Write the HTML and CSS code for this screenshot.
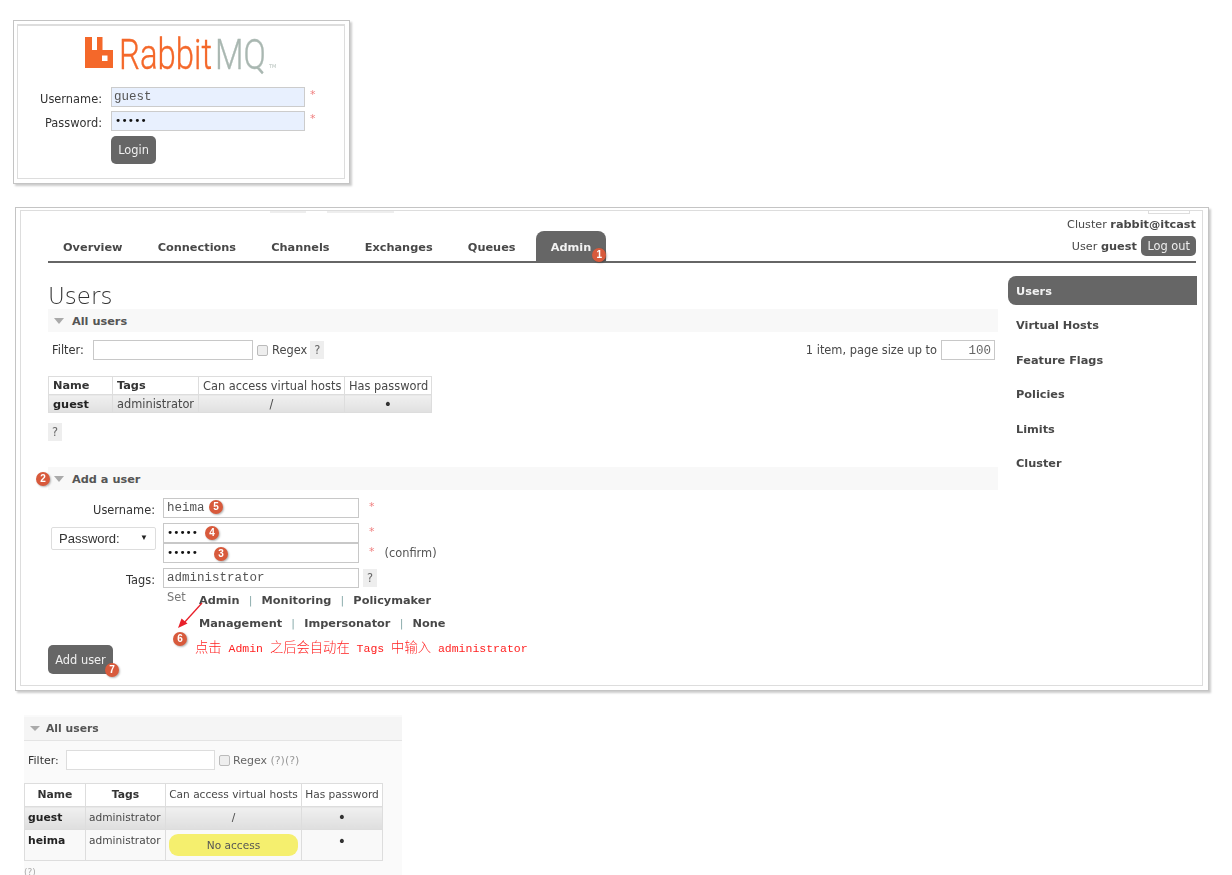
FILE: index.html
```html
<!DOCTYPE html>
<html lang="en">
<head>
<meta charset="utf-8">
<title>RabbitMQ</title>
<link rel="stylesheet" href="styles.css">
</head>
<body>
<section class="login-shot">
  <div class="login-inner">
    <div class="logo">
      <svg class="logo-mark" viewBox="0 0 28 31" width="28" height="31" aria-hidden="true"><path fill="#f4682a" fill-rule="evenodd" d="M0 0h7v13h5V0h5.500v13H28v18H0z M17 18.500v5.500h5.500v-5.500z"/></svg>
      <span class="logo-text"><span class="logo-rabbit">Rabbit</span><span class="logo-mq">MQ</span></span>
      <span class="logo-tm">TM</span>
    </div>
    <div class="login-form">
      <label class="login-label">Username:</label>
      <div class="login-input mono">guest</div>
      <span class="req">*</span>
      <label class="login-label">Password:</label>
      <div class="login-input dots">•••••</div>
      <span class="req">*</span>
      <span></span>
      <div class="btn login-btn">Login</div>
    </div>
  </div>
</section>

<section class="main-shot">
  <div class="main-inner">
    <div class="top-scraps"><i class="scrap s1"></i><i class="scrap s2"></i><i class="scrap s3"></i></div>
    <header class="head">
      <nav class="tabs">
        <a class="tab">Overview</a>
        <a class="tab">Connections</a>
        <a class="tab">Channels</a>
        <a class="tab">Exchanges</a>
        <a class="tab">Queues</a>
        <a class="tab active">Admin<b class="badge b1">1</b></a>
      </nav>
      <div class="who">
        <div>Cluster <b>rabbit@itcast</b></div>
        <div class="who-user">User <b>guest</b> <span class="logout">Log out</span></div>
      </div>
    </header>
    <div class="body-row">
      <main class="content">
        <h1>Users</h1>
        <div class="bar"><span class="tri"></span>All users</div>
        <div class="filter-row">
          <span class="filter-label">Filter:</span>
          <span class="input filter-input"></span>
          <span class="check"></span>
          <span class="regex">Regex</span>
          <span class="help">?</span>
          <span class="paging">1 item, page size up to</span>
          <span class="input page-input mono">100</span>
        </div>
        <table class="tbl">
          <thead><tr><th class="c1">Name</th><th class="c2">Tags</th><th class="c3">Can access virtual hosts</th><th class="c4">Has password</th></tr></thead>
          <tbody><tr><td class="nm">guest</td><td>administrator</td><td class="ctr">/</td><td class="ctr dot">•</td></tr></tbody>
        </table>
        <span class="help help-block">?</span>
        <div class="bar add-bar"><b class="badge b2">2</b><span class="tri"></span>Add a user</div>
        <div class="add-form">
          <div class="form-label">Username:</div>
          <div class="input form-input mono rel">heima<b class="badge b5">5</b></div>
          <div class="form-note"><span class="req">*</span></div>

          <div class="pw-select">Password:<span class="pw-arrow">▼</span></div>
          <div class="input form-input dots rel">•••••<b class="badge b4">4</b></div>
          <div class="form-note"><span class="req">*</span></div>
          <div class="input form-input dots rel">•••••<b class="badge b3">3</b></div>
          <div class="form-note"><span class="req">*</span><span class="confirm">(confirm)</span></div>

          <div class="form-label">Tags:</div>
          <div class="input form-input mono">administrator</div>
          <div class="form-note tags-note"><span class="help">?</span></div>

          <div class="tag-set">
            <span class="set">Set</span>
            <div class="tag-lines">
              <div class="tag-line"><b>Admin</b><i>|</i><b>Monitoring</b><i>|</i><b>Policymaker</b></div>
              <div class="tag-line"><b>Management</b><i>|</i><b>Impersonator</b><i>|</i><b>None</b></div>
              <div class="note-line"><span class="cjk">点击</span> Admin <span class="cjk">之后会自动在</span> Tags <span class="cjk">中输入</span> administrator</div>
            </div>
            <svg class="arrow" width="40" height="50" viewBox="0 0 40 50" aria-hidden="true"><path d="M27 10 8 31" stroke="#e8202a" stroke-width="1.300" fill="none"/><path d="M3 35l3.500-9.500 6 5z" fill="#e8202a"/></svg>
            <b class="badge b6">6</b>
          </div>
        </div>
        <div class="btn add-btn">Add user<b class="badge b7">7</b></div>
      </main>
      <aside class="side">
        <a class="side-item active">Users</a>
        <a class="side-item">Virtual Hosts</a>
        <a class="side-item">Feature Flags</a>
        <a class="side-item">Policies</a>
        <a class="side-item">Limits</a>
        <a class="side-item">Cluster</a>
      </aside>
    </div>
  </div>
</section>

<section class="after-shot">
  <div class="bar2"><span class="tri tri2"></span>All users</div>
  <div class="filter2">
    <span class="f2-label">Filter:</span>
    <span class="f2-input"></span>
    <span class="check check2"></span>
    <span class="f2-regex">Regex <em>(?)(?)</em></span>
  </div>
  <table class="tbl2">
    <thead><tr><th class="d1">Name</th><th class="d2">Tags</th><th class="d3 light">Can access virtual hosts</th><th class="d4 light">Has password</th></tr></thead>
    <tbody>
      <tr class="r-guest"><td class="nm">guest</td><td>administrator</td><td class="ctr">/</td><td class="ctr dot">•</td></tr>
      <tr class="r-heima"><td class="nm">heima</td><td>administrator</td><td class="pill-cell"><span class="pill">No access</span></td><td class="ctr dot">•</td></tr>
    </tbody>
  </table>
  <div class="cut">(?)</div>
</section>
</body>
</html>
```

FILE: styles.css
```css
* { box-sizing: border-box; }
html, body { margin: 0; padding: 0; background: #fff; }
body {
  width: 1232px; height: 875px; overflow: hidden;
  font-family: "DejaVu Sans", Verdana, sans-serif;
  font-size: 11.4px; color: #484848;
  padding-top: 20px;
}
b { font-weight: 700; font-size: 11.3px; }
.mono { font-family: "Liberation Mono", monospace; }
.dots { font-family: "DejaVu Sans", sans-serif; font-size: 11px; color: #111; }
.rel { position: relative; }

/* login */
.login-shot {
  width: 337px; height: 164px; margin-left: 13px; padding: 3px 4px 4px 3px;
  background: #fff; border: 1px solid #c4c4c4; box-shadow: 2px 2px 2px #ccc; filter: blur(.3px);
}
.login-inner { height: 100%; border: 1px solid #ddd; border-top-width: 2px; }
.logo { display: flex; align-items: flex-start; height: 61px; padding: 11px 0 0 67px; position: relative; }
.logo-mark { flex: none; }
.logo-text {
  display: block; font-family: Roboto, sans-serif; font-weight: 300; font-size: 43px; line-height: 35px;
  margin-left: 6px; width: 160px; white-space: nowrap; transform: scaleX(.765); transform-origin: left center;
}
.logo-rabbit { color: #f4682a; -webkit-text-stroke: .4px #f4682a; }
.logo-mq { color: #a9b7b1; margin-left: 4px; -webkit-text-stroke: .4px #a9b7b1; }
.logo-tm { position: absolute; left: 251px; top: 37px; font-size: 5px; color: #b5c0bb; }
.login-form { display: grid; grid-template-columns: 84px 194px auto; column-gap: 9px; row-gap: 4px; align-items: center; }
.login-label { text-align: right; color: #333; padding-top: 3px; }
.login-input {
  height: 20px; background: #e8f0fe; border: 1px solid #ccc; font-size: 12.500px; line-height: 18px; padding-left: 2px; color: #555;
}
.login-input.dots { color: #111; font-size: 10.500px; line-height: 17px; letter-spacing: .2px; padding-left: 3px; }
.req { color: #f08080; font-size: 11px; }
.login-form .req { margin-top: -6px; margin-left: -4px; }
.btn { background: #666; color: #f0f0f0; border-radius: 5px; display: flex; align-items: center; justify-content: center; }
.login-btn { grid-column: 2; width: 45px; height: 28px; margin-top: 1px; }

/* main */
.main-shot {
  width: 1194px; height: 484px; margin: 23px 0 0 15px; padding: 2px 5px 4px 4px;
  background: #fff; border: 1px solid #c4c4c4; box-shadow: 2px 2px 2px #ccc; filter: blur(.3px);
}
.main-inner { height: 100%; border: 1px solid #ddd; padding: 0 6px 0 27px; position: relative; }
.top-scraps { position: absolute; left: 0; right: 0; top: 0; height: 3px; }
.scrap { position: absolute; top: 0; height: 2px; background: #eee; }
.s1 { left: 249px; width: 36px; }
.s2 { left: 306px; width: 67px; }
.s3 { left: 1127px; width: 42px; height: 3px; background: #fff; border: 1px solid #ddd; border-top: 0; }
.head { display: flex; justify-content: space-between; height: 52px; border-bottom: 2px solid #666; }
.tabs { display: flex; align-items: flex-end; }
.tab {
  font-weight: 700; font-size: 11.3px; color: #484848; height: 30px; line-height: 33px; padding: 0 15px; margin-right: 5.200px; position: relative; white-space: nowrap;
}
.tab.active { background: #666; color: #f2f2f2; border-radius: 8px 8px 0 0; margin-right: 0; }
.who { text-align: right; padding-top: 6px; line-height: 16px; font-size: 11.2px; }
.who-user { margin-top: 3px; }
.who b { color: #484848; }
.logout { display: inline-block; background: #666; color: #eee; border-radius: 5px; padding: 0 6px; height: 20px; line-height: 20px; margin-left: 1px; font-size: 11.4px; }
.body-row { display: flex; }
.content { width: 950px; position: relative; flex: none; }
h1 { font-weight: 200; font-size: 23px; line-height: 34px; color: #333; margin: 16px 0 0; height: 30px; }
.bar { height: 23px; background: #f8f8f8; font-weight: 700; font-size: 11.3px; line-height: 25px; padding-left: 24px; position: relative; color: #555; }
.tri { position: absolute; left: 6px; top: 9px; width: 0; height: 0; border: 5.500px solid transparent; border-top: 6px solid #aaa; border-bottom: 0; }
.filter-row { display: flex; align-items: center; height: 36px; padding: 0 3px 0 4px; }
.filter-label { width: 41px; color: #333; }
.input { background: #fff; border: 1px solid #c8c8c8; display: block; }
.filter-input { width: 160px; height: 20px; }
.check { width: 11px; height: 11px; background: #eee; border: 1px solid #bbb; border-radius: 2px; margin-left: 4px; }
.regex { margin-left: 4px; }
.help { display: inline-block; width: 14px; height: 18px; background: #eee; color: #666; text-align: center; line-height: 18px; margin-left: 3px; }
.paging { margin-left: auto; margin-right: 4px; }
.page-input { width: 54px; height: 20px; text-align: right; padding: 0 3px; font-size: 12.500px; line-height: 20px; color: #666; }
.tbl { border-collapse: collapse; margin-top: 8px; width: 383px; table-layout: fixed; }
.tbl th, .tbl td { border: 1px solid #ddd; padding: 0 4px; height: 18px; white-space: nowrap; font-weight: 400; text-align: left; }
.tbl th.c1, .tbl th.c2 { font-weight: 700; font-size: 11.3px; color: #333; }
.c1 { width: 64px; } .c2 { width: 86px; } .c3 { width: 146px; } .c4 { width: 87px; }
.tbl td { background: linear-gradient(#f0f0f0, #e0e0e0); padding-top: 1px; }
td.nm { font-weight: 700; font-size: 11.3px; color: #222; }
td.ctr { text-align: center; }
td.dot { font-size: 14px; line-height: 14px; color: #333; }
.help-block { display: block; margin: 10px 0 0 0; }
.add-bar { margin-top: 26px; }
.add-form {
  display: grid; grid-template-columns: 107px 196px 1fr; column-gap: 8px;
  grid-template-rows: 20px 25px 20px 25px auto;
  margin-top: 8px; position: relative;
}
.form-label { text-align: right; color: #333; line-height: 24px; align-self: end; height: 20px; }
.pw-select {
  grid-row: 2 / span 2; align-self: start; justify-self: end; margin: 9px -1px 0 0; width: 105px; height: 23px; border: 1px solid #ddd; border-radius: 2px;
  font-family: "Liberation Sans", Arial, sans-serif; font-size: 13px; line-height: 21px; padding: 0 7px; color: #333; position: relative;
}
.pw-arrow { position: absolute; right: 7px; top: -1px; font-size: 8px; color: #222; }
.form-input { height: 20px; font-size: 12.500px; line-height: 18px; padding-left: 3px; color: #555; align-self: end; }
.form-input.dots { font-size: 10.500px; color: #111; line-height: 17px; }
.form-note { display: flex; align-items: center; padding-left: 1px; align-self: end; height: 20px; }
.form-note .req { margin-left: 1px; margin-top: -4px; }
.confirm { margin-left: 10px; color: #555; }
.tags-note { padding-left: 0; }
.tags-note .help { margin-left: -4px; }
.tag-set { grid-column: 2 / span 2; position: relative; display: flex; padding-left: 4px; margin-top: 1px; }
.set { width: 32px; color: #777; margin-top: 1px; }
.tag-lines { display: flex; flex-direction: column; }
.tag-line { display: flex; align-items: center; height: 23px; white-space: nowrap; }
.tag-line b { color: #484848; }
.tag-line i { font-style: normal; color: #8aa; margin: 0 9.200px; font-size: 11px; }
.note-line { font-family: "Liberation Mono", "Noto Sans CJK SC", monospace; font-size: 11.500px; color: #f22; height: 20px; margin: 2px 0 0 -4px; white-space: nowrap; }
.cjk { font-family: "Noto Sans CJK SC", sans-serif; font-size: 13.300px; font-weight: 300; }
.arrow { position: absolute; left: 12px; top: 4px; }
.badge {
  position: absolute; width: 14px; height: 14px; border-radius: 50%; background: #d85a3c; color: #fff; font: 700 10px/14px "Liberation Sans", sans-serif; text-align: center;
  box-shadow: 1px 1px 2px rgba(0,0,0,.3);
}
.b1 { right: 0; bottom: -1px; }
.b2 { left: -12px; top: 5px; }
.b5 { left: 45px; top: 1px; }
.b4 { left: 41px; top: 2px; }
.b3 { left: 50px; top: 3px; }
.b6 { left: 10px; top: 43px; }
.b7 { right: -6px; bottom: -3px; }
.add-btn { width: 65px; height: 29px; position: absolute; left: 0; top: 382px; }
.side { flex: none; width: 189px; margin: 13px 0 0 10px; }
.side-item { display: block; height: 30px; line-height: 32px; padding-left: 8px; font-weight: 700; font-size: 11.3px; color: #484848; margin-bottom: 4.400px; }
.side-item.active { height: 29px; margin-bottom: 5.400px; background: #666; color: #f2f2f2; border-radius: 8px 0 0 8px; }

/* after */
.after-shot {
  width: 378px; height: 160px; margin: 24px 0 0 24px; background: #fafafa; overflow: hidden; filter: blur(.45px); font-size: 11px; padding-top: 2px;
}
.bar2 { height: 24px; background: #f5f5f5; border-bottom: 1px solid #e4e4e4; font-weight: 700; font-size: 10.800px; line-height: 24px; padding-left: 22px; position: relative; color: #555; }
.tri2 { left: 6px; top: 9px; border-left-width: 5px; border-right-width: 5px; border-top-width: 5px; }
.filter2 { display: flex; align-items: center; height: 38px; padding-left: 4px; }
.f2-label { width: 38px; color: #333; }
.f2-input { width: 149px; height: 20px; background: #fff; border: 1px solid #ddd; }
.check2 { margin-left: 4px; }
.f2-regex { margin-left: 3px; color: #666; }
.f2-regex em { font-style: normal; color: #999; }
.tbl2 { border-collapse: collapse; width: 358px; table-layout: fixed; margin-top: 4px; background: #fff; font-size: 10.600px; }
.tbl2 th, .tbl2 td { border: 1px solid #ddd; padding: 0 3px; white-space: nowrap; }
.tbl2 th { height: 23px; padding-bottom: 2px; color: #333; text-align: center; background: #fff; font-size: 10.800px; }
.tbl2 th.light { font-weight: 400; color: #484848; font-size: 10.600px; }
.tbl2 td.nm { font-size: 10.800px; }
.d1 { width: 61px; } .d2 { width: 80px; } .d3 { width: 136px; } .d4 { width: 81px; }
.tbl2 .r-guest td { height: 23px; padding-bottom: 2px; background: linear-gradient(#f0f0f0, #dedede); }
.tbl2 .r-heima td { height: 31px; background: #f9f9f9; vertical-align: top; padding-top: 4px; }
.tbl2 .r-heima .pill-cell { padding: 4px 3px; }
.pill { display: block; height: 22px; line-height: 22px; background: #f5ef6e; border-radius: 9px; text-align: center; color: #555; }
.cut { color: #aaa; font-size: 9px; margin-top: 6px; }
```
